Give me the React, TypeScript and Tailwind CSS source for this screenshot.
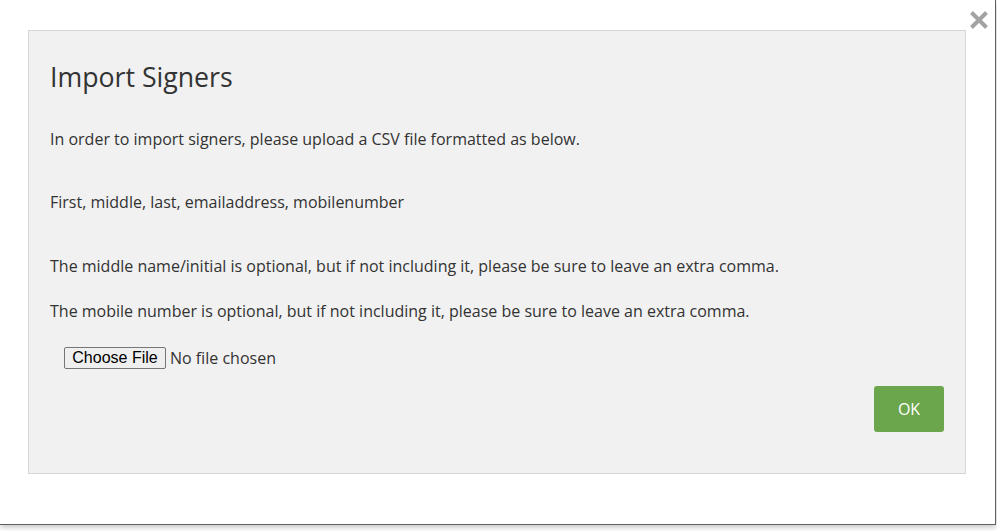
const ImportSigners = () => {
  return (
    <div className="relative h-[525px] w-[996px] border-b border-r border-[#5f5f5f] bg-white pt-[30px] pl-[28px] shadow-[0_2px_6px_rgba(0,0,0,0.25)]">
      {/* Close button */}
      <button
        type="button"
        className="absolute right-[6px] top-[10px] flex h-[20px] w-[20px] items-center justify-center"
        aria-label="Close"
      >
        <svg viewBox="0 0 20 20" className="h-[20px] w-[20px]">
          <path
            d="M2.5 2.5 L17.5 17.5 M17.5 2.5 L2.5 17.5"
            stroke="#a3a3a3"
            strokeWidth="4"
            strokeLinecap="butt"
          />
        </svg>
      </button>

      {/* Panel */}
      <div className="flex h-[444px] w-[938px] flex-col border border-[#d6d6d6] bg-[#f1f1f1] px-[21px] pt-[28px] font-['Open_Sans',sans-serif] text-[#333]">
        <h2 className="text-[26.7px] leading-[36px] font-normal">Import Signers</h2>
        <p className="mt-[32px] text-[16px] leading-[24px]">
          In order to import signers, please upload a CSV file formatted as below.
        </p>
        <p className="mt-[39px] text-[16px] leading-[24px]">
          First, middle, last, emailaddress, mobilenumber
        </p>
        <p className="mt-[40px] text-[16px] leading-[24px]">
          The middle name/initial is optional, but if not including it, please be sure to leave an extra comma.
        </p>
        <p className="mt-[21px] text-[16px] leading-[24px]">
          The mobile number is optional, but if not including it, please be sure to leave an extra comma.
        </p>
        <div className="ml-[14px] mt-[24px] flex h-[22px] items-center">
          <button
            type="button"
            className="h-[22px] w-[102px] rounded-[2px] border border-[#767676] bg-[#efefef] font-['Liberation_Sans',Arial,sans-serif] text-[16px] leading-[20px] text-black"
          >
            Choose File
          </button>
          <span className="ml-[4px] text-[16px] leading-[22px] text-[#333]">No file chosen</span>
        </div>
        <div className="mt-[17px] flex justify-end">
          <button
            type="button"
            className="h-[46px] w-[70px] rounded-[3px] bg-[#6ba54c] text-[16px] text-white"
          >
            OK
          </button>
        </div>
      </div>
    </div>
  );
};

export default function App() {
  return (
    <div className="h-[531px] w-[997px] overflow-hidden bg-white">
      <ImportSigners />
    </div>
  );
}
